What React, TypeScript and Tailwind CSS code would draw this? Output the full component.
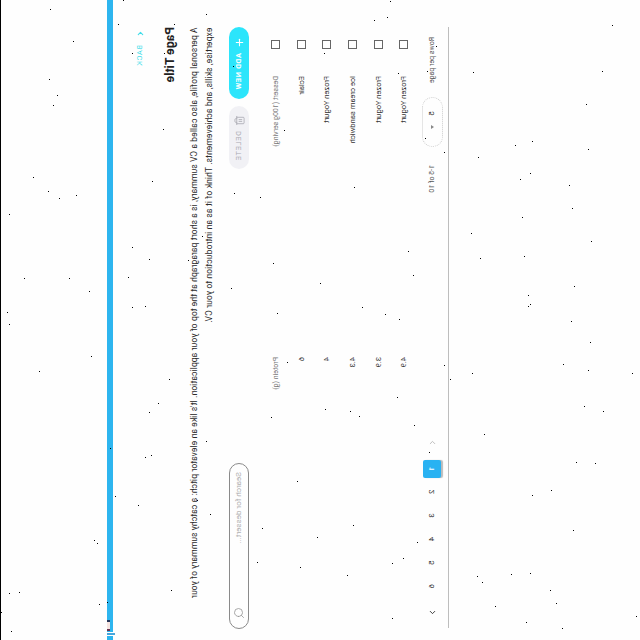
import { ChevronLeft, ChevronRight, Plus, Search, Trash2 } from "lucide-react";

const rows = [
  { name: "Eclair", protein: "6" },
  { name: "Frozen Yogurt", protein: "4" },
  { name: "Ice cream sandwich", protein: "4.3" },
  { name: "Frozen Yogurt", protein: "3.9" },
  { name: "Frozen Yogurt", protein: "4.9" },
];

const pages = ["2", "3", "4", "5", "6"];

// Speckle positions as x,y pairs.
const specks: [number, number][] = [
  [50,9],[73,41],[49,79],[57,95],[53,105],[33,177],[48,191],[59,198],[76,195],[118,24],[132,53],[123,0],[164,53],[163,129],[152,181],[174,24],[206,14],
  [390,1],[387,17],[374,20],[324,53],[398,73],[436,46],[427,71],[284,130],[425,138],[444,152],[354,187],[234,193],[260,197],[233,66],
  [202,236],[188,260],[231,288],[9,214],[132,247],[149,259],[24,278],[69,278],[128,277],[89,291],[7,312],[9,324],[132,307],[145,306],[91,356],[39,371],[169,379],[158,403],[149,412],[273,263],[277,313],[287,362],[271,417],
  [522,217],[471,233],[591,241],[408,251],[480,258],[524,256],[413,275],[320,283],[574,286],[528,295],[530,304],[528,306],[362,307],[385,314],[399,319],[571,321],[590,342],[444,365],[450,379],[472,373],[563,364],[588,370],[632,373],[584,406],[603,411],[397,397],[325,409],[350,411],[359,416],[414,425],
  [612,25],[602,71],[473,72],[586,104],[532,141],[515,145],[588,149],[478,157],[530,173],[520,179],[569,185],[572,208],
  [110,448],[151,455],[145,457],[115,496],[138,505],[94,540],[97,543],[9,593],[19,592],[99,604],[1,612],[11,631],[171,590],[206,441],[197,500],[210,514],[297,481],[262,528],[317,537],[257,562],[300,567],[107,602],
  [484,434],[429,452],[576,462],[595,463],[551,490],[532,495],[353,525],[417,542],[403,558],[392,563],[347,575],[573,530],[477,576],[482,582],[511,574],[530,573],[550,590],[556,603],[495,606],[392,618],[526,622],[562,628],[636,616],
];

function Checkbox() {
  return <span className="ml-[13px] block size-[9px] shrink-0 border border-[#666]" />;
}

function Row({ name, protein, header }: { name: string; protein: string; header?: boolean }) {
  return (
    <div
      className={
        header
          ? "flex h-[25.6px] items-center text-[7px] text-[#777]"
          : "flex h-[25.6px] items-center text-[7.5px] tracking-[0.05px] text-[#333]"
      }
    >
      <Checkbox />
      <span className="ml-[27px] w-[281px]">{name}</span>
      <span>{protein}</span>
    </div>
  );
}

function TopBar() {
  return (
    <header className="mt-[106px] flex h-[6px] shrink-0 items-start bg-[#2db5ef]">
      <span className="ml-[620px] flex h-[3px] w-[11px]">
        <i className="w-[2px] bg-[#24365a]" />
        <i className="w-[7px] bg-[#f7e4e0]" />
        <i className="w-[2px] bg-[#6c3450]" />
      </span>
      <i className="ml-px h-[7px] w-px bg-white" />
      <i className="h-[8px] w-[2px] bg-[#45a6dc]" />
      <i className="h-[7px] w-px bg-white" />
    </header>
  );
}

export default function App() {
  return (
    <div className="relative size-[640px] overflow-hidden bg-[#fefefe]">
      {/* Page axes are swapped: rows run left to right, text runs downwards. */}
      <div className="flex size-[640px] origin-top-left flex-col border-t border-black font-['Roboto',sans-serif] whitespace-nowrap [transform:matrix(0,1,1,0,0,0)]">
        <TopBar />
        <main className="flex flex-col pl-[27px]">
          <a className="mt-[20px] flex h-[14px] items-center text-[7.5px] tracking-[0.5px] text-[#3fdde9]">
            <ChevronLeft className="ml-[2px] mr-[7px] size-[9px]" strokeWidth={2.8} />
            BACK
          </a>
          <h1 className="mt-[14px] h-[18px] text-[12px] leading-[18px] font-bold tracking-[0.1px] text-[#222]">Page Title</h1>
          <p className="mt-[8px] ml-[0.5px] text-[8.5px] leading-[15px] tracking-[0.11px] text-[#2b2b2b]">
            A personal profile, also called a CV summary, is a short paragraph at the top of your application. It's like an elevator pitch: a catchy summary of your
            <br />
            <span className="tracking-[0.13px]">expertise, skills, and achievements. Think of it as an introduction to your CV.</span>
          </p>
          <div className="mt-[12px] flex h-[20px] w-[602px] items-center">
            <button className="flex h-[20px] w-[72px] items-center rounded-full bg-[#2ce5fb] pl-[10px] text-[7.5px] font-bold tracking-[0.6px] text-white">
              <Plus className="mr-[5px] size-[11px]" strokeWidth={2.4} />
              ADD NEW
            </button>
            <button className="ml-[7px] flex h-[20px] w-[63px] items-center rounded-full bg-[#f1f1f5] pl-[9px] text-[7.5px] tracking-[0.6px] text-[#aaaab2]">
              <Trash2 className="mr-[5px] size-[11px]" strokeWidth={1.8} />
              DELETE
            </button>
            <div className="ml-auto flex h-[20px] w-[166px] items-center rounded-full border border-[#8a8a8a] pr-[9px] pl-[8px] text-[8px] text-[#b0b0b0]">
              Search for dessert...
              <Search className="ml-auto size-[12px] text-[#999]" strokeWidth={1.7} />
            </div>
          </div>
          <section className="mt-[14px] flex w-[601px] flex-col">
            <Row name="Dessert (100g serving)" protein="Protein (g)" header />
            {rows.map((r, i) => (
              <Row key={i} name={r.name} protein={r.protein} />
            ))}
            <footer className="flex h-[32px] items-center border-b border-[#bdbdbd] text-[7px] text-[#555]">
              <span className="ml-[10px] w-[60px]">Rows per page</span>
              <span className="flex h-[21px] w-[50px] items-center rounded-full border border-dotted border-[#ccc] pl-[13px] text-[8px] text-[#333]">
                5
                <i className="ml-[9px] border-x-2 border-t-[3px] border-x-transparent border-t-[#888]" />
              </span>
              <span className="ml-[18px]">1-5 of 10</span>
              <nav className="ml-auto flex items-center text-[8px] text-[#333]">
                <ChevronLeft className="mr-[13px] size-[9px] text-[#aaa]" />
                <b className="mr-[2px] flex size-[18px] items-center justify-center rounded-[2px] bg-[#29b2f2] font-medium text-white shadow-[0_2px_1px_#bbb]">1</b>
                {pages.map((p) => (
                  <span key={p} className="w-[23.6px] text-center">
                    {p}
                  </span>
                ))}
                <ChevronRight className="mr-[11px] ml-[10px] size-[9px]" strokeWidth={2.5} />
              </nav>
            </footer>
          </section>
        </main>
      </div>
      <svg className="pointer-events-none absolute inset-0" width="640" height="640" shapeRendering="crispEdges">
        {specks.map(([x, y], i) => (
          <rect key={i} x={x} y={y} width="1" height="1" />
        ))}
      </svg>
    </div>
  );
}
